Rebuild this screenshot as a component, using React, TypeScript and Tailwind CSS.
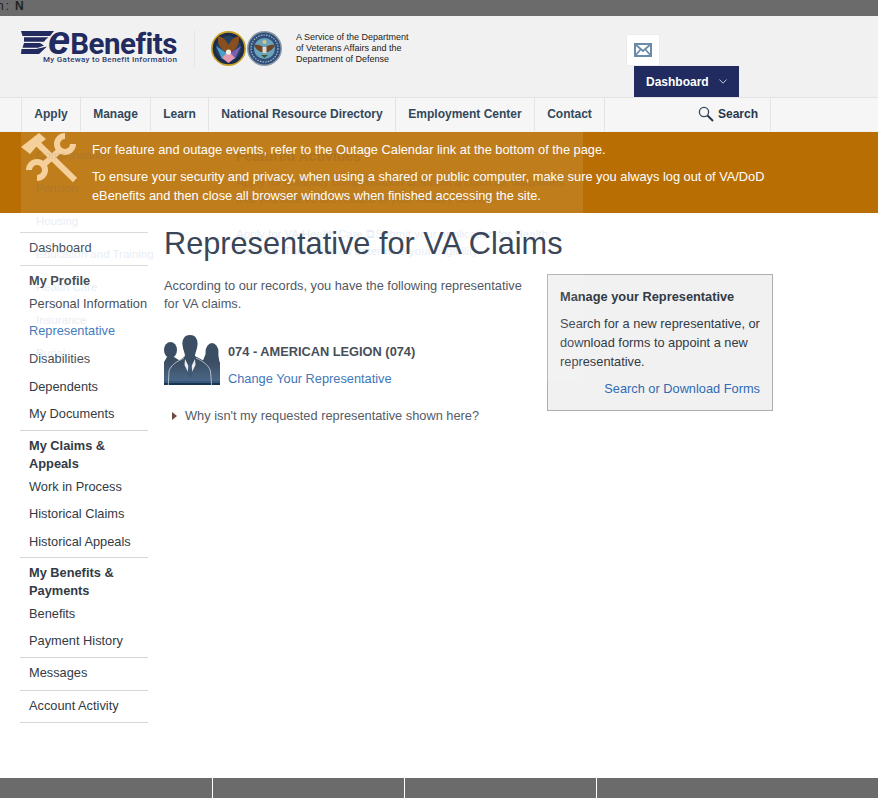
import React from "react";

const navItems = [
  { label: "Apply", w: "w-[59px]" },
  { label: "Manage", w: "w-[70px]" },
  { label: "Learn", w: "w-[58px]" },
  { label: "National Resource Directory", w: "w-[187px]" },
  { label: "Employment Center", w: "w-[139px]" },
  { label: "Contact", w: "w-[70px]" },
];

function Flag() {
  return (
    <svg width="33" height="23" viewBox="0 0 33 23" className="shrink-0">
      <g fill="#222b60">
        <polygon points="0,0 33,0 29,5 1.5,5" />
        <polygon points="3,6.2 27.5,6.2 25,8.2 23,10.8 3,10.8" />
        <polygon points="3,12 19,12 23,14.5 17,16.8 1.5,16.8" />
        <polygon points="0.5,18 15,18 26,15.5 18,23 0,23" />
      </g>
    </svg>
  );
}

function VaSeal() {
  return (
    <svg width="35" height="35" viewBox="0 0 35 35" className="shrink-0">
      <circle cx="17.5" cy="17.5" r="17.5" fill="#c9a227" />
      <circle cx="17.5" cy="17.5" r="15.8" fill="#1d2c4a" />
      <circle cx="17.5" cy="17.5" r="12.5" fill="#26405f" />
      <path d="M5 15 L11 28 L17 23 Z" fill="#4aa0c8" />
      <path d="M30 15 L24 28 L18 23 Z" fill="#7a5fb5" />
      <path d="M11 27 L17.5 32 L24 27 L17.5 20 Z" fill="#e59ab0" />
      <path d="M7 5 C12 6 15 9 17.5 14 C20 9 23 6 28 5 C29 13 25 20 17.5 22 C10 20 6 13 7 5 Z" fill="#8a4f1f" />
      <circle cx="17.5" cy="21" r="2.6" fill="#f2efe6" />
    </svg>
  );
}

function DodSeal() {
  return (
    <svg width="35" height="35" viewBox="0 0 35 35" className="shrink-0">
      <circle cx="17.5" cy="17.5" r="17.5" fill="#8d9aa6" />
      <circle cx="17.5" cy="17.5" r="16" fill="#2f4f7a" />
      <circle cx="17.5" cy="17.5" r="13.5" fill="none" stroke="#a9b8c4" strokeWidth="1.2" strokeDasharray="1.5 1.2" />
      <circle cx="17.5" cy="17.5" r="10.5" fill="#6ba3bb" />
      <path d="M7 14 C12 13 15 15 17.5 17 C20 15 23 13 28 14 C26 19 22 21 17.5 22 C13 21 9 19 7 14 Z" fill="#6f4528" />
      <rect x="15.5" y="16" width="4" height="6" fill="#d9d9d9" />
      <path d="M14 24 L21 24 L17.5 27 Z" fill="#3a5a30" />
      <circle cx="17.5" cy="11" r="2" fill="#d9c48a" />
    </svg>
  );
}

function Tools() {
  return (
    <svg width="56" height="50" viewBox="0 0 56 50" className="shrink-0 block">
      <g fill="none" stroke="#f5cb90" strokeWidth="6">
        <path d="M13 7 L54 47" />
        <path d="M39 17 L21 33" />
        <path d="M44 3 A8 8 0 1 0 52 11" />
        <path d="M8 37 A8 8 0 1 1 16 45" />
      </g>
      <polygon points="0,14 18,0 25,6 16,13 9,21" fill="#f5cb90" />
    </svg>
  );
}

function People() {
  return (
    <svg width="56" height="50" viewBox="0 0 56 50" className="shrink-0 block">
      <defs>
        <linearGradient id="pg" x1="0" y1="0" x2="0" y2="1">
          <stop offset="0" stopColor="#263a52" />
          <stop offset="0.9" stopColor="#37587c" />
          <stop offset="0.9" stopColor="#18344f" />
          <stop offset="1" stopColor="#18344f" />
        </linearGradient>
      </defs>
      <ellipse cx="6.5" cy="15" rx="6.5" ry="8" fill="#263a52" />
      <path d="M0 27 L3 22 L10 22 L18 27 Z" fill="#263a52" />
      <ellipse cx="48" cy="17" rx="6.5" ry="9" fill="#263a52" />
      <path d="M38 28 L42 18 L54 18 L56 30 Z" fill="#263a52" />
      <path d="M0 27 L56 27 L56 50 L0 50 Z" fill="url(#pg)" />
      <path d="M26 0 C32 0 34 5 33.5 10 C33 15 31 18 31 21 L42 27 L14 27 L21 21 C21 18 19 15 18.5 10 C18 5 20 0 26 0 Z" fill="#263a52" />
      <path d="M21 24 L26 34 L31 24 L31.5 30 L26 41 L20.5 30 Z" fill="#e6ebf0" />
      <path d="M24.5 29 L27.5 29 L28.5 39 L26 43 L23.5 39 Z" fill="#2b4563" />
      <path d="M20 23 C12 27 7 30 5 36 L4.3 50" fill="none" stroke="#aab6c3" strokeWidth="1" />
      <path d="M32 23 C38 26 44 29 46.5 36 L47.5 50" fill="none" stroke="#aab6c3" strokeWidth="1" />
    </svg>
  );
}

function SideItem({ children, h = "h-[27.5px]", active = false }: { children: React.ReactNode; h?: string; active?: boolean }) {
  return (
    <a className={`block ${h} pl-[9px] leading-[27px] whitespace-nowrap ${active ? "text-[#2f6cb3]" : "text-[#323a45]"}`}>{children}</a>
  );
}

function SideHead({ children }: { children: React.ReactNode }) {
  return <div className="pl-[9px] font-bold text-[#323a45] leading-[18px]">{children}</div>;
}

function GhostPanel() {
  const left = ["Compensation", "Pension", "Housing", "Education and Training", "Health Care", "Insurance", "Burial"];
  return (
    <div className="absolute left-[21px] top-[131px] w-[562px] h-[250px] bg-white/10 pointer-events-none flex text-[11.5px]">
      <div className="w-[200px] pl-[15px] pt-[8px] opacity-10 text-[#1b4f9c]">
        {left.map((l) => (
          <div key={l} className="h-[33px] leading-[33px]">{l}</div>
        ))}
      </div>
      <div className="flex-1 pl-[15px] pt-[15px] opacity-10 text-[#1b4f9c] leading-[17px]">
        <div className="font-bold text-[14px] text-[#222] leading-[20px] mb-[8px]">Featured Activities</div>
        <div className="text-[#333] whitespace-nowrap">Apply for disability compensation ⧉Submit a claim for disabilities</div>
        <div className="text-[#333] mb-[18px] whitespace-nowrap">that you believe are related to your military service.</div>
        <div className="whitespace-nowrap">Apply for VA Health Care ⧉Submit your application for Health</div>
        <div className="whitespace-nowrap">Benefits. This helps us determine your eligibility.</div>
      </div>
    </div>
  );
}

export default function App() {
  return (
    <div className="relative min-h-[798px] flex flex-col bg-white text-[12.8px] overflow-hidden [font-family:'Liberation_Sans',Arial,sans-serif]">
      {/* top strip */}
      <div className="h-4 bg-[#6b6b6b] overflow-hidden text-[12px] leading-[13px] text-[#222]">
        <span className="-ml-[3px] inline-block whitespace-nowrap">h<span className="ml-[2px]">:</span><b className="ml-[6px]">N</b></span>
      </div>

      {/* header */}
      <header className="h-[81px] bg-[#f1f1f1] flex">
        <div className="w-[174px] ml-[21px] mt-[15px] shrink-0">
          <div className="flex items-baseline h-[23px]">
            <div className="self-start shrink-0"><Flag /></div>
            <span className="-ml-[6px] text-[40px] leading-[19px] font-bold italic text-[#222b60]">e</span>
            <span className="text-[29.5px] leading-[19px] font-bold text-[#222b60] tracking-[-0.5px] [font-family:'Roboto',sans-serif]">Benefits</span>
          </div>
          <div className="mt-[1px] pl-[22px] text-[8px] leading-[10px] font-medium text-[#2d3a6e] whitespace-nowrap tracking-[0.3px] [font-family:'Roboto',sans-serif]">My Gateway to Benefit Information</div>
        </div>
        <div className="w-px h-[37px] bg-[#e6e6e6] mt-[14px] -ml-[1px] shrink-0" />
        <div className="flex gap-[1px] ml-[16px] mt-[15px] h-[35px]">
          <VaSeal />
          <DodSeal />
        </div>
        <div className="ml-[14px] mt-[16px] text-[9px] leading-[11px] text-[#222] w-[130px]">
          A Service of the Department<br />of Veterans Affairs and the<br />Department of Defense
        </div>
        <div className="ml-[200px] flex flex-col items-start mt-[18px] shrink-0">
          <div className="w-[34px] h-[32px] bg-white border border-[#ececec] flex items-center justify-center">
            <svg width="18" height="14" viewBox="0 0 18 14">
              <rect x="1" y="1" width="16" height="12" fill="#fff" stroke="#6b8bab" strokeWidth="2" />
              <path d="M1 1 L9 8 L17 1 M1 13 L6.5 6.5 M17 13 L11.5 6.5" fill="none" stroke="#6b8bab" strokeWidth="1.8" />
            </svg>
          </div>
          <div className="ml-[8px] w-[105px] h-[31px] bg-[#222b60] text-white font-bold text-[12px] flex items-center pl-[12px] gap-[10px]">
            Dashboard
            <svg width="8" height="5" viewBox="0 0 8 5"><path d="M0.4 0.5 L4 4.2 L7.6 0.5" fill="none" stroke="#c5cadb" strokeWidth="1" /></svg>
          </div>
        </div>
      </header>

      {/* nav */}
      <nav className="h-[35px] bg-[#f1f1f1] flex">
        <div className="flex h-[34px] w-full bg-[#f6f6f6] border-t border-[#e4e4e4] pl-[21px]">
          {navItems.map((n) => (
            <a key={n.label} className={`${n.w} h-full border-l border-[#e4e4e4] flex items-center justify-center pb-[1px] font-bold text-[12px] text-[#33475b] whitespace-nowrap`}>
              {n.label}
            </a>
          ))}
          <div className="w-[167px] h-full border-x border-[#e4e4e4] flex items-center justify-end pr-[12px] gap-[4px] font-bold text-[12px] text-[#26374a] pb-[2px]">
            <svg width="16" height="16" viewBox="0 0 16 16">
              <circle cx="6" cy="6" r="4.6" fill="none" stroke="#33475b" strokeWidth="1.3" />
              <path d="M9.5 9.5 L15 15" stroke="#26374a" strokeWidth="2" />
            </svg>
            Search
          </div>
        </div>
      </nav>

      {/* banner */}
      <div className="h-[81px] bg-[#b86e03] flex text-white text-[12.8px]">
        <div className="ml-[21px] mt-[1px]"><Tools /></div>
        <div className="ml-[15px] pt-[8px] w-[690px] leading-[19px]">
          <p>For feature and outage events, refer to the Outage Calendar link at the bottom of the page.</p>
          <p className="mt-[8px]">To ensure your security and privacy, when using a shared or public computer, make sure you always log out of VA/DoD eBenefits and then close all browser windows when finished accessing the site.</p>
        </div>
      </div>

      {/* content */}
      <div className="flex flex-1">
        <aside className="w-[128px] ml-[20px] mt-[19px] shrink-0">
          <div className="border-y border-[#d6d6d6] h-[34px] pt-[1px]"><SideItem>Dashboard</SideItem></div>
          <div className="border-b border-[#d6d6d6] h-[165px] pt-[6px]">
            <SideHead>My Profile</SideHead>
            <SideItem h="h-[27px]">Personal Information</SideItem>
            <SideItem h="h-[28px]" active>Representative</SideItem>
            <SideItem h="h-[28px]">Disabilities</SideItem>
            <SideItem h="h-[27px]">Dependents</SideItem>
            <SideItem>My Documents</SideItem>
          </div>
          <div className="border-b border-[#d6d6d6] h-[127px] pt-[6px]">
            <SideHead>My Claims &amp;<br />Appeals</SideHead>
            <SideItem h="h-[27px]">Work in Process</SideItem>
            <SideItem>Historical Claims</SideItem>
            <SideItem>Historical Appeals</SideItem>
          </div>
          <div className="border-b border-[#d6d6d6] h-[100px] pt-[6px]">
            <SideHead>My Benefits &amp;<br />Payments</SideHead>
            <SideItem h="h-[27px]">Benefits</SideItem>
            <SideItem>Payment History</SideItem>
          </div>
          <div className="border-b border-[#d6d6d6] h-[33px] pt-[1px]"><SideItem>Messages</SideItem></div>
          <div className="border-b border-[#d6d6d6] h-[32px] pt-[1px]"><SideItem>Account Activity</SideItem></div>
        </aside>

        <main className="ml-[16px] w-[609px] pt-[13px]">
          <h1 className="text-[30.7px] leading-[36px] text-[#243044] whitespace-nowrap">Representative for VA Claims</h1>
          <div className="flex mt-[11px]">
            <div className="w-[383px] shrink-0">
              <p className="text-[#3d4551] leading-[18px] mt-[4px] w-[365px]">According to our records, you have the following representative for VA claims.</p>
              <div className="flex mt-[22px]">
                <People />
                <div className="ml-[8px]">
                  <div className="font-bold text-[#323a45] leading-[18px] mt-[8px]">074 - AMERICAN LEGION (074)</div>
                  <a className="block text-[#2f6cb3] leading-[18px] mt-[9px]">Change Your Representative</a>
                </div>
              </div>
              <div className="flex items-center mt-[19px] ml-[8px] text-[#555b66] leading-[18px]">
                <svg width="5" height="8" viewBox="0 0 5 8" className="mr-[8px]"><path d="M0 0 L5 4 L0 8 Z" fill="#6b4a4a" /></svg>
                Why isn't my requested representative shown here?
              </div>
            </div>
            <div className="w-[226px] h-[137px] bg-[#f1f1f1] border border-[#aeaeae] px-[12px] pt-[12px] shrink-0 mt-[1px] text-[#323a45] leading-[19px]">
              <div className="font-bold">Manage your Representative</div>
              <p className="mt-[8px] leading-[19px]">Search for a new representative, or download forms to appoint a new representative.</p>
              <a className="block text-right text-[#2f6cb3] mt-[8px]">Search or Download Forms</a>
            </div>
          </div>
        </main>
      </div>

      {/* footer */}
      <footer className="h-5 bg-[#6b6b6b] flex shrink-0">
        <div className="w-[213px] border-r border-white" />
        <div className="w-[192px] border-r border-white" />
        <div className="w-[192px] border-r border-white" />
      </footer>

      <GhostPanel />
    </div>
  );
}
